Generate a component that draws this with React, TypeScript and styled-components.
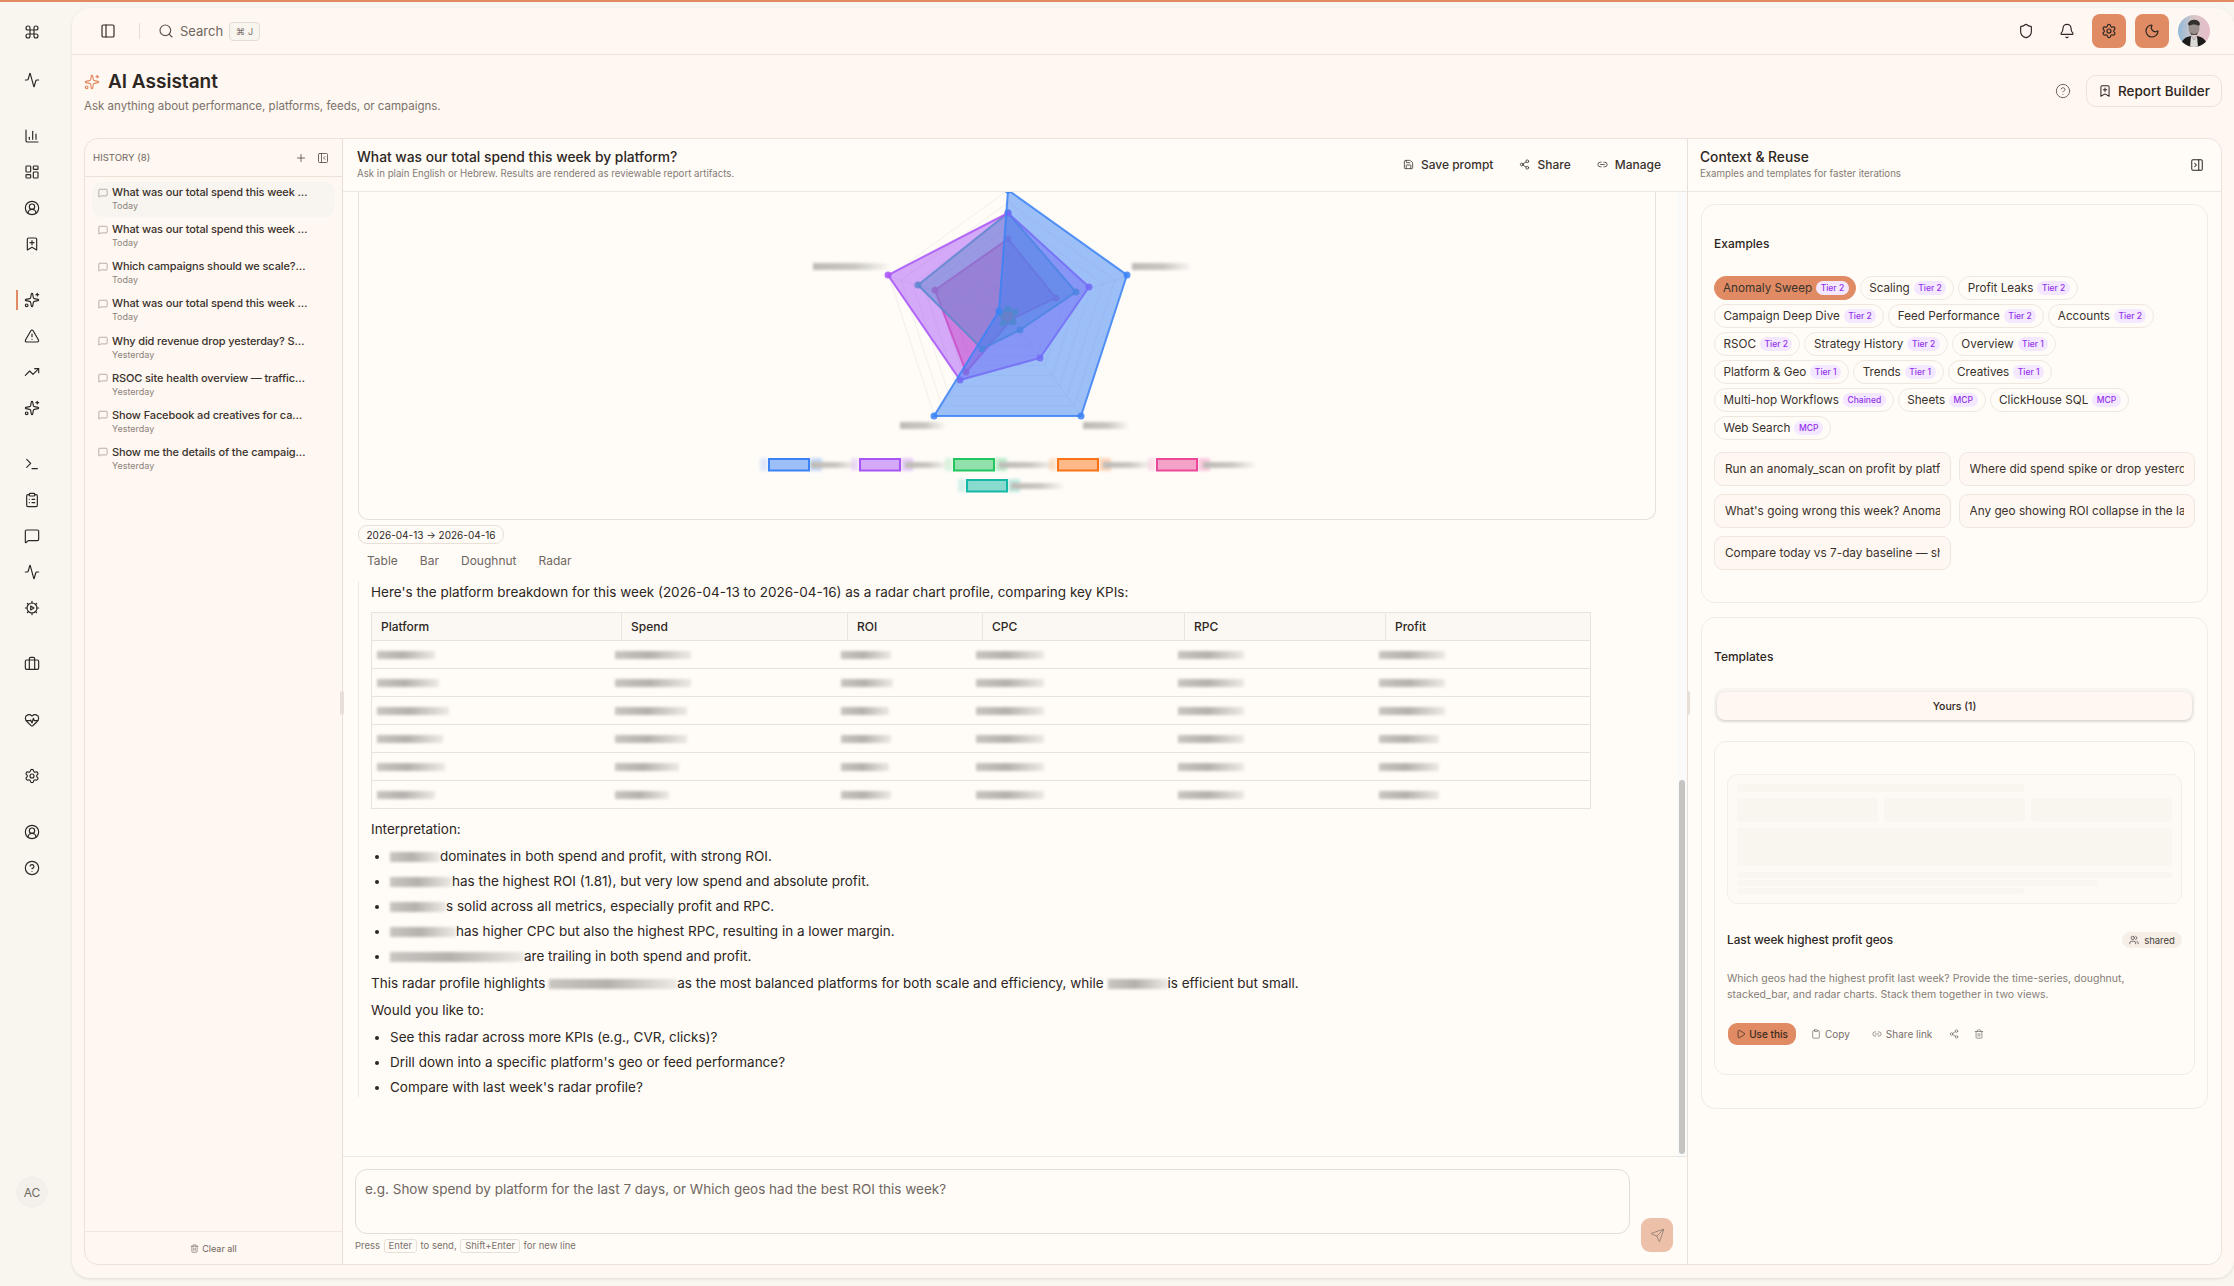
import React from "react";
import styled, { createGlobalStyle } from "styled-components";
import {
  Activity, Bell, BookmarkPlus, Briefcase, ChartColumn, CircleHelp, CircleUserRound, ClipboardList, Command, HeartPulse,
  LayoutDashboard, Link2, MessageSquare, Moon, PanelLeft, PanelLeftClose, PanelRightClose, Play, Plus, Save, Search,
  Send, Settings, Share2, Shield, Sparkles, Terminal, Trash2, TrendingUp, TriangleAlert, Users, Clipboard,
} from "lucide-react";

const Global = createGlobalStyle`
  html, body { margin: 0; padding: 0; height: 100%; background: #f9f6f0; }
  body { font-family: Inter, "Noto Sans", "Liberation Sans", sans-serif; color: #2d2622; overflow: hidden; }
  #root { height: 100%; }
  * { box-sizing: border-box; }
`;

const Page = styled.div`
  height: 1286px;
  display: flex;
  flex-direction: column;
  background: #f9f6f0;
`;
const TopLine = styled.div`
  height: 2px;
  background: #e08b63;
  flex: none;
`;
const Body = styled.div`
  flex: 1;
  display: flex;
  min-height: 0;
`;
const Rail = styled.nav`
  width: 72px;
  flex: none;
  display: flex;
  flex-direction: column;
  padding: 12px 8px 78px 0;
`;
const RailGroup = styled.div<{ $gap?: number }>`
  display: flex;
  flex-direction: column;
  margin-top: ${(p) => p.$gap ?? 20}px;
`;
const RailSlot = styled.div<{ $active?: boolean }>`
  position: relative;
  height: 36px;
  display: flex;
  align-items: center;
  justify-content: center;
  color: #2d2622;
  ${(p) =>
    p.$active &&
    `&::before { content: ""; position: absolute; left: 16px; top: 8px; width: 1.5px; height: 20px; background: #e08b63; }`}
`;
const RailAvatar = styled.div`
  margin: auto auto 0;
  width: 32px;
  height: 32px;
  border-radius: 50%;
  background: #f3f0eb;
  color: #6f6860;
  font-size: 12px;
  display: flex;
  align-items: center;
  justify-content: center;
`;
const Card = styled.main`
  flex: 1;
  min-width: 0;
  margin: 6px 0 8px;
  display: flex;
  flex-direction: column;
  background: #fff7f1;
  border-radius: 18px;
  box-shadow: 0 1px 3px rgba(60, 40, 20, 0.12);
`;
const TopBar = styled.header`
  height: 47px;
  flex: none;
  border-bottom: 1px solid #ebe3da;
  display: flex;
  align-items: center;
  padding: 0 24px 0 28px;
`;
const Separator = styled.span`
  width: 1px;
  height: 16px;
  background: #e6ddd3;
  margin: 0 18px 0 23px;
`;
const SearchLabel = styled.span`
  font-size: 13px;
  color: #6f6660;
  margin: 0 6px 0 6px;
`;
const Kbd = styled.kbd`
  width: 31px;
  height: 19px;
  border: 1px solid #e3dcd2;
  background: #f8f4ee;
  border-radius: 4px;
  font-family: inherit;
  font-size: 9px;
  color: #7c736c;
  display: flex;
  align-items: center;
  justify-content: center;
  gap: 3px;
`;
const TopActions = styled.div`
  margin-left: auto;
  display: flex;
  align-items: center;
  gap: 9px;
`;
const IconButton = styled.button<{ $accent?: boolean }>`
  width: ${(p) => (p.$accent ? 34 : 32)}px;
  height: 34px;
  border: 0;
  padding: 0;
  border-radius: 8px;
  background: ${(p) => (p.$accent ? "#e08b63" : "transparent")};
  color: #2d2622;
  display: flex;
  align-items: center;
  justify-content: center;
`;
const PageHead = styled.section`
  height: 83px;
  flex: none;
  display: flex;
  justify-content: space-between;
  padding: 0 12px;
`;
const TitleBlock = styled.div`
  padding-top: 15px;
`;
const TitleRow = styled.div`
  display: flex;
  align-items: center;
  gap: 8px;
  color: #e08b63;
`;
const PageTitle = styled.h1`
  margin: 0;
  font-size: 19px;
  line-height: 24px;
  font-weight: 600;
  color: #2d2622;
`;
const PageSub = styled.p`
  margin: 4px 0 0;
  font-size: 11.5px;
  line-height: 16px;
  color: #7b726b;
`;
const HeadActions = styled.div`
  display: flex;
  align-items: flex-start;
  gap: 15px;
  padding-top: 20px;
  color: #6f6660;
`;
const HelpWrap = styled.span`
  display: flex;
  height: 32px;
  align-items: center;
`;
const OutlineButton = styled.button`
  height: 32px;
  width: 136px;
  border: 1px solid #ebe3da;
  border-radius: 10px;
  background: transparent;
  font-family: inherit;
  font-size: 13.5px;
  font-weight: 500;
  color: #2d2622;
  display: flex;
  align-items: center;
  justify-content: center;
  gap: 6px;
`;
const Panels = styled.div`
  flex: 1;
  min-height: 0;
  margin: 0 12px 13px;
  border: 1px solid #ebe3da;
  border-radius: 14px;
  display: flex;
`;
const History = styled.aside`
  width: 257px;
  flex: none;
  display: flex;
  flex-direction: column;
`;
const HistoryHead = styled.div`
  height: 38px;
  flex: none;
  border-bottom: 1px solid #ebe3da;
  display: flex;
  align-items: center;
  padding: 0 13px 0 8px;
  gap: 10px;
  color: #5d554f;
`;
const HistoryLabel = styled.span`
  font-size: 9.6px;
  color: #6f6660;
  margin-right: auto;
`;
const HistoryList = styled.ul`
  list-style: none;
  margin: 0;
  padding: 5px 7px;
  flex: 1;
  display: flex;
  flex-direction: column;
  gap: 2.15px;
`;
const HistoryItem = styled.li<{ $active?: boolean }>`
  height: 35px;
  padding: 3px 27px 0 6px;
  border-radius: 10px;
  background: ${(p) => (p.$active ? "#f8f5f0" : "transparent")};
  display: grid;
  grid-template-columns: 10px 1fr;
  align-content: start;
  column-gap: 4px;
  color: #8b837c;
  align-items: center;
`;
const HistoryTitle = styled.span`
  font-size: 11px;
  letter-spacing: -0.12px;
  line-height: 15px;
  font-weight: 500;
  color: #3a322d;
  white-space: nowrap;
  overflow: hidden;
  text-overflow: ellipsis;
`;
const HistoryWhen = styled.span`
  grid-column: 2;
  font-size: 9px;
  line-height: 12px;
  color: #8b837c;
`;
const HistoryFoot = styled.div`
  height: 33px;
  flex: none;
  border-top: 1px solid #f0e8df;
  display: flex;
  align-items: center;
  justify-content: center;
  gap: 3px;
  font-size: 9px;
  color: #6f6660;
`;
const MainPanel = styled.section`
  position: relative;
  flex: 1;
  min-width: 0;
  display: flex;
  flex-direction: column;
  background: #fffcf8;
  border-left: 1.5px solid #e8dfd6;
  border-right: 1.5px solid #e8dfd6;
`;
const Handle = styled.span<{ $side: "left" | "right" }>`
  position: absolute;
  ${(p) => p.$side}: -3px;
  top: 552px;
  width: 4px;
  height: 24px;
  border-radius: 2px;
  background: #e8e0d8;
`;
const PanelHead = styled.div`
  height: 53px;
  flex: none;
  border-bottom: 1px solid #ebe7e1;
  display: flex;
  align-items: center;
  justify-content: space-between;
  padding: 0 12px 1px 14px;
  background: #fffcf8;
`;
const PanelTitle = styled.h2`
  margin: 0;
  font-size: 13.8px;
  line-height: 18px;
  font-weight: 500;
  color: #2d2622;
`;
const PanelSub = styled.p`
  margin: 1px 0 0;
  font-size: 9.7px;
  line-height: 14px;
  color: #847b74;
`;
const HeadButtons = styled.div`
  display: flex;
  align-items: center;
  gap: 26px;
  padding: 0 14px 0 0;
`;
const HeadButton = styled.span`
  display: flex;
  align-items: center;
  gap: 7px;
  font-size: 12px;
  font-weight: 500;
  color: #3a322d;
`;
const Scroll = styled.div`
  position: relative;
  flex: 1;
  min-height: 0;
  overflow: hidden;
  padding: 0 31px 0 15px;
`;
const Track = styled.div`
  position: absolute;
  top: 0;
  right: 0;
  bottom: 0;
  width: 10px;
  background: #fafafa;
`;
const Thumb = styled.div`
  position: absolute;
  top: 588px;
  right: 2px;
  width: 6px;
  height: 374px;
  border-radius: 3px;
  background: #c6c4c1;
`;
const ChartCard = styled.div`
  height: 328px;
  border: 1px solid #e8dfd6;
  border-top: 0;
  border-radius: 0 0 10px 10px;
`;
const ChartSvg = styled.svg`
  display: block;
  width: 100%;
  height: 100%;
`;
const DateChip = styled.div`
  margin-top: 5px;
  width: 146px;
  height: 19px;
  border: 1px solid #e8dfd6;
  border-radius: 9px;
  font-size: 10px;
  display: flex;
  align-items: center;
  justify-content: center;
  color: #2d2622;
`;
const Tabs = styled.div`
  height: 20px;
  margin-top: 6px;
  padding-left: 9px;
  display: flex;
  align-items: center;
  gap: 22px;
  font-size: 12px;
  color: #6f6660;
`;
const Message = styled.article`
  margin-top: 11px;
  border-left: 1px solid #f0e9e1;
  padding: 1px 0 0 12px;
  font-size: 13.5px;
  line-height: 20px;
  color: #2d2622;
`;
const Para = styled.p<{ $top?: number }>`
  margin: ${(p) => p.$top ?? 7}px 0 0;
`;
const Table = styled.table`
  width: 1219px;
  margin-top: 10px;
  border-collapse: collapse;
  table-layout: fixed;
  border: 1px solid #e8e2da;
`;
const Th = styled.th`
  height: 28px;
  padding: 0 0 0 9px;
  background: #fbf8f3;
  font-size: 12px;
  font-weight: 500;
  text-align: left;
  border-right: 1px solid #ebe5dd;
  border-bottom: 1px solid #e8e2da;
  &:last-child { border-right: 0; }
`;
const Td = styled.td`
  height: 28px;
  padding: 0;
  border-bottom: 1px solid #e8e2da;
  line-height: 0;
  &:first-child { padding-left: 5px; }
  &:not(:first-child) > span { margin-left: -7px; }
`;
const Smudge = styled.span<{ $w: number; $inline?: boolean }>`
  display: inline-block;
  width: ${(p) => p.$w}px;
  height: ${(p) => (p.$inline ? 10 : 8)}px;
  vertical-align: ${(p) => (p.$inline ? "-1px" : "middle")};
  background: linear-gradient(90deg, rgba(110, 105, 100, 0.38), rgba(100, 95, 90, 0.48) 45%, rgba(140, 135, 130, 0.16));
  filter: blur(1.6px);
`;
const BulletList = styled.ul`
  margin: 7px 0 0;
  padding: 0 0 0 19px;
  display: flex;
  flex-direction: column;
  gap: 5px;
`;
const Composer = styled.div`
  height: 108px;
  flex: none;
  border-top: 1px solid #ebe7e1;
  padding: 12px 14px 0 12px;
  display: grid;
  grid-template-columns: 1fr 32px;
  column-gap: 11px;
  grid-template-rows: 65px auto;
`;
const Input = styled.div`
  grid-column: 1;
  grid-row: 1;
  border: 1px solid #e4dcd6;
  border-radius: 12px;
  padding: 10px 9px;
  font-size: 13.5px;
  line-height: 18px;
  color: #6f6660;
`;
const SendButton = styled.button`
  grid-column: 2;
  grid-row: 1 / span 2;
  align-self: start;
  margin-top: 49px;
  height: 34px;
  border: 0;
  padding: 0;
  border-radius: 9px;
  background: #ecc0a9;
  color: #8a7a70;
  display: flex;
  align-items: center;
  justify-content: center;
`;
const Hint = styled.div`
  grid-column: 1;
  grid-row: 2;
  display: flex;
  align-items: center;
  gap: 3.5px;
  margin-top: 4px;
  font-size: 9.5px;
  color: #7b726b;
  height: 15px;
`;
const HintKey = styled.kbd`
  height: 14px;
  padding: 0 4px;
  border: 1px solid #e8dfd6;
  border-radius: 3px;
  font-family: inherit;
  font-size: 9.5px;
  display: flex;
  align-items: center;
`;
const Context = styled.aside`
  width: 533px;
  flex: none;
  display: flex;
  flex-direction: column;
  background: #fffbf6;
  border-radius: 0 14px 14px 0;
`;
const ContextHead = styled(PanelHead)`
  background: transparent;
  border-radius: 0 14px 0 0;
  padding: 0 17px 1px 12px;
`;
const ContextBody = styled.div`
  padding: 12px 13px;
  display: flex;
  flex-direction: column;
  gap: 14px;
`;
const Section = styled.section<{ $h: number }>`
  height: ${(p) => p.$h}px;
  border: 1px solid #f1ebe3;
  border-radius: 14px;
  padding: 30px 12px 0;
  background: #fffcf8;
`;
const SectionTitle = styled.h3`
  margin: 0;
  font-size: 12px;
  line-height: 18px;
  font-weight: 500;
  color: #2d2622;
`;
const Chips = styled.div`
  margin-top: 23px;
  padding-right: 12px;
  display: flex;
  flex-wrap: wrap;
  gap: 4px;
`;
const Chip = styled.span<{ $on?: boolean }>`
  height: 24px;
  padding: ${(p) => (p.$on ? "0 6px 0 8px" : "0 7px 0 8.5px")};
  border-radius: 12px;
  border: 1px solid ${(p) => (p.$on ? "#e08b63" : "#efe7de")};
  background: ${(p) => (p.$on ? "#e08b63" : "transparent")};
  display: flex;
  align-items: center;
  gap: 4px;
  font-size: 11.7px;
  color: #3a322d;
  white-space: nowrap;
`;
const Badge = styled.span`
  height: 14px;
  padding: 0 4.5px;
  border-radius: 7px;
  background: #f3e8ff;
  color: #9333ea;
  font-size: 8.5px;
  font-weight: 500;
  display: flex;
  align-items: center;
`;
const Prompts = styled.div`
  margin-top: 12px;
  display: grid;
  grid-template-columns: 1fr 1fr;
  gap: 8px;
`;
const Prompt = styled.div`
  height: 34px;
  min-width: 0;
  padding: 0 10px;
  border: 1px solid #efe7de;
  border-radius: 9px;
  background: #fff7f1;
  font-size: 11.8px;
  line-height: 32px;
  white-space: nowrap;
`;
const PromptText = styled.span`
  display: block;
  overflow: hidden;
  color: #3a322d;
`;
const SegTrack = styled.div`
  margin-top: 22px;
  height: 35px;
  padding: 4px 3px;
  border-radius: 10px;
  background: #f8f5f0;
`;
const Seg = styled.div`
  height: 28px;
  border-radius: 8px;
  background: #fff7f1;
  box-shadow: 0 1px 3px rgba(40, 30, 20, 0.2);
  font-size: 10.5px;
  font-weight: 500;
  display: flex;
  align-items: center;
  justify-content: center;
`;
const TemplateCard = styled.div`
  margin-top: 18px;
  height: 334px;
  border: 1px solid #f1ebe3;
  border-radius: 12px;
  padding: 32px 12px 0;
`;
const Preview = styled.div`
  height: 130px;
  border: 1px solid #f3eee7;
  border-radius: 10px;
  padding: 9px;
  display: flex;
  flex-direction: column;
  gap: 6px;
  background: #fdfaf5;
`;
const Skeleton = styled.div<{ $h: number; $w?: string }>`
  height: ${(p) => p.$h}px;
  width: ${(p) => p.$w ?? "100%"};
  border-radius: 3px;
  background: #f9f6f0;
`;
const SkeletonRow = styled.div`
  display: grid;
  grid-template-columns: repeat(3, 1fr);
  gap: 6px;
`;
const SkeletonLines = styled.div`
  display: flex;
  flex-direction: column;
  gap: 2px;
`;
const TemplateHead = styled.div`
  margin-top: 26px;
  height: 20px;
  display: flex;
  align-items: center;
  justify-content: space-between;
`;
const TemplateName = styled.div`
  font-size: 11.8px;
  font-weight: 500;
  color: #2d2622;
`;
const SharedBadge = styled.span`
  width: 60px;
  height: 16px;
  border-radius: 8px;
  background: #f6efe7;
  display: flex;
  align-items: center;
  justify-content: center;
  gap: 5px;
  font-size: 9.5px;
  color: #4a423c;
`;
const TemplateDesc = styled.p`
  margin: 21px 0 0;
  font-size: 10.5px;
  line-height: 16px;
  color: #857c75;
`;
const TemplateActions = styled.div`
  margin-top: 20px;
  padding-left: 1px;
  display: flex;
  align-items: center;
  color: #77706a;
  font-size: 10px;
`;
const UseButton = styled.button`
  width: 68px;
  height: 22px;
  border: 0;
  padding: 0;
  border-radius: 9px;
  background: #e08b63;
  color: #3a2a20;
  font-family: inherit;
  font-size: 10px;
  font-weight: 500;
  display: flex;
  align-items: center;
  justify-content: center;
  gap: 3px;
  margin-right: 15px;
`;
const TextAction = styled.span<{ $mr: number }>`
  display: flex;
  align-items: center;
  gap: 4px;
  margin-right: ${(p) => p.$mr}px;
`;

const ic = { strokeWidth: 1.75 };

function CogPlay() {
  return (
    <svg width="16" height="16" viewBox="0 0 24 24" fill="none" stroke="currentColor" strokeWidth="1.75" strokeLinecap="round" strokeLinejoin="round">
      <circle cx="12" cy="12" r="7.5" />
      <path d="M12 2v2.5M12 19.5V22M2 12h2.5M19.5 12H22M5 5l1.7 1.7M17.3 17.3 19 19M19 5l-1.7 1.7M6.7 17.3 5 19" />
      <path d="M10 9l5 3-5 3z" />
    </svg>
  );
}

function Avatar() {
  return (
    <svg width="32" height="32" viewBox="0 0 32 32">
      <defs>
        <clipPath id="av">
          <circle cx="16" cy="16" r="16" />
        </clipPath>
        <linearGradient id="avbg" x1="0" y1="0" x2="1" y2="0">
          <stop offset="0" stopColor="#8fb9d8" />
          <stop offset="0.5" stopColor="#d9c7c9" />
          <stop offset="1" stopColor="#e7bcc8" />
        </linearGradient>
      </defs>
      <g clipPath="url(#av)">
        <rect width="32" height="32" fill="url(#avbg)" />
        <ellipse cx="16" cy="13" rx="5.5" ry="7" fill="#9a8f8a" />
        <path d="M10 9c1-5 11-6 12 0l-1 2c-3-2-7-2-10 0z" fill="#33302e" />
        <path d="M12 17c2 2.5 6 2.5 8 0l-1 3h-6z" fill="#55504c" />
        <path d="M3 32c0-8 5-10 10-11l3 4 3-4c5 1 10 3 10 11z" fill="#1d1c1b" />
        <path d="M13 21l3 4 3-4 1 11h-8z" fill="#dcdad6" />
      </g>
    </svg>
  );
}

const series = [
  { c: "236,72,153", hex: "#ec4899", pts: [[1007, 238], [1055, 297], [1011, 318], [965, 371], [934, 289]] },
  { c: "20,184,166", hex: "#14b8a6", pts: [[1007, 212], [1075, 291], [1019, 329], [981, 348], [917, 284]] },
  { c: "249,115,22", hex: "#f97316", pts: [[1007, 311], [1012, 312], [1010, 319], [1003, 320], [1001, 312]] },
  { c: "34,197,94", hex: "#22c55e", pts: [[1007, 308], [1014, 311], [1012, 321], [1002, 322], [999, 312]] },
  { c: "168,85,247", hex: "#a855f7", pts: [[1007, 212], [1088, 286], [1039, 357], [959, 379], [887, 274]] },
  { c: "59,130,246", hex: "#3b82f6", pts: [[1007, 189], [1126, 274], [1080, 415], [933, 415], [998, 310]] },
];

const ring = (r: number) =>
  [0, 1, 2, 3, 4]
    .map((i) => {
      const a = (-90 + i * 72) * (Math.PI / 180);
      return `${1007 + r * Math.cos(a)},${314 + r * Math.sin(a)}`;
    })
    .join(" ");

const legend = [
  { hex: "#3b82f6", c: "59,130,246", x: 767, y: 457, lx: 810, lw: 46 },
  { hex: "#a855f7", c: "168,85,247", x: 858, y: 457, lx: 904, lw: 42 },
  { hex: "#22c55e", c: "34,197,94", x: 952, y: 457, lx: 998, lw: 56 },
  { hex: "#f97316", c: "249,115,22", x: 1056, y: 457, lx: 1102, lw: 48 },
  { hex: "#ec4899", c: "236,72,153", x: 1155, y: 457, lx: 1202, lw: 52 },
  { hex: "#14b8a6", c: "20,184,166", x: 965, y: 478, lx: 1010, lw: 52 },
];

const axisLabels = [
  { x: 812, y: 262, w: 75 },
  { x: 1131, y: 262, w: 58 },
  { x: 899, y: 421, w: 45 },
  { x: 1082, y: 421, w: 45 },
];

function Radar() {
  return (
    <ChartSvg viewBox="358 191 1296 328" preserveAspectRatio="xMinYMin slice">
      <defs>
        <filter id="soft" x="-30%" y="-100%" width="160%" height="300%">
          <feGaussianBlur stdDeviation="1.8" />
        </filter>
        <linearGradient id="fade">
          <stop offset="0" stopColor="#bdbab5" />
          <stop offset="0.55" stopColor="#c9c6c1" />
          <stop offset="1" stopColor="#c9c6c1" stopOpacity="0.1" />
        </linearGradient>
      </defs>
      <g fill="none" stroke="rgba(70,60,50,0.07)" strokeWidth="1">
        {[125, 112.5, 100, 87.5, 75, 62.5, 50, 37.5, 25, 12.5].map((r) => (
          <polygon key={r} points={ring(r)} />
        ))}
        {ring(125).split(" ").map((p) => {
          const [x, y] = p.split(",");
          return <line key={p} x1="1007" y1="314" x2={x} y2={y} />;
        })}
      </g>
      {series.map((s) => (
        <g key={s.hex}>
          <polygon
            points={s.pts.map((p) => p.join(",")).join(" ")}
            fill={`rgba(${s.c},0.5)`}
            stroke={s.hex}
            strokeWidth="2"
            strokeOpacity="0.85"
          />
          {s.pts.map((p) => (
            <circle key={p.join()} cx={p[0]} cy={p[1]} r="3.5" fill={s.hex} fillOpacity="0.85" />
          ))}
        </g>
      ))}
      {axisLabels.map((l) => (
        <rect key={l.x} x={l.x} y={l.y} width={l.w} height={7} fill="url(#fade)" filter="url(#soft)" />
      ))}
      {legend.map((l) => (
        <g key={l.hex}>
          <rect x={l.x + 42} y={l.y} width={12} height={13} fill={`rgba(${l.c},0.28)`} filter="url(#soft)" />
          <rect x={l.x - 8} y={l.y} width={8} height={13} fill={`rgba(${l.c},0.16)`} filter="url(#soft)" />
          <rect x={l.lx} y={l.y + 4} width={l.lw} height={6} fill="url(#fade)" filter="url(#soft)" />
          <rect x={l.x + 1} y={l.y + 1} width={40} height={11.5} fill={`rgba(${l.c},0.5)`} stroke={l.hex} strokeWidth="2" />
        </g>
      ))}
    </ChartSvg>
  );
}

const historyItems = [
  ["What was our total spend this week by platform?", "Today"],
  ["What was our total spend this week by platform?", "Today"],
  ["Which campaigns should we scale? Show me the data", "Today"],
  ["What was our total spend this week by platform?", "Today"],
  ["Why did revenue drop yesterday? Summarize the causes", "Yesterday"],
  ["RSOC site health overview — traffic, RPC and margin", "Yesterday"],
  ["Show Facebook ad creatives for campaign performance", "Yesterday"],
  ["Show me the details of the campaign with best ROI", "Yesterday"],
];

const columns = [250, 226, 135, 202, 201, 205];
const rows = [
  [58, 76, 50, 68, 66, 66],
  [62, 76, 52, 68, 66, 66],
  [72, 72, 48, 68, 66, 66],
  [66, 72, 50, 68, 66, 60],
  [68, 64, 48, 68, 66, 60],
  [58, 54, 50, 68, 66, 60],
];

const chips: [string, string, boolean?][] = [
  ["Anomaly Sweep", "Tier 2", true],
  ["Scaling", "Tier 2"],
  ["Profit Leaks", "Tier 2"],
  ["Campaign Deep Dive", "Tier 2"],
  ["Feed Performance", "Tier 2"],
  ["Accounts", "Tier 2"],
  ["RSOC", "Tier 2"],
  ["Strategy History", "Tier 2"],
  ["Overview", "Tier 1"],
  ["Platform & Geo", "Tier 1"],
  ["Trends", "Tier 1"],
  ["Creatives", "Tier 1"],
  ["Multi-hop Workflows", "Chained"],
  ["Sheets", "MCP"],
  ["ClickHouse SQL", "MCP"],
  ["Web Search", "MCP"],
];

const prompts = [
  "Run an anomaly_scan on profit by platform last 7 days",
  "Where did spend spike or drop yesterday compared to baseline",
  "What's going wrong this week? Anomalies by platform",
  "Any geo showing ROI collapse in the last 3 days",
  "Compare today vs 7-day baseline — show the deltas",
];

export default function App() {
  return (
    <Page>
      <Global />
      <TopLine />
      <Body>
        <Rail>
          <RailGroup $gap={0}>
            <RailSlot><Command size={16} {...ic} /></RailSlot>
          </RailGroup>
          <RailGroup $gap={12}>
            <RailSlot><Activity size={16} {...ic} /></RailSlot>
          </RailGroup>
          <RailGroup>
            <RailSlot><ChartColumn size={16} {...ic} /></RailSlot>
            <RailSlot><LayoutDashboard size={16} {...ic} /></RailSlot>
            <RailSlot><CircleUserRound size={16} {...ic} /></RailSlot>
            <RailSlot><BookmarkPlus size={16} {...ic} /></RailSlot>
          </RailGroup>
          <RailGroup>
            <RailSlot $active><Sparkles size={16} {...ic} /></RailSlot>
            <RailSlot><TriangleAlert size={16} {...ic} /></RailSlot>
            <RailSlot><TrendingUp size={16} {...ic} /></RailSlot>
            <RailSlot><Sparkles size={16} {...ic} /></RailSlot>
          </RailGroup>
          <RailGroup>
            <RailSlot><Terminal size={16} {...ic} /></RailSlot>
            <RailSlot><ClipboardList size={16} {...ic} /></RailSlot>
            <RailSlot><MessageSquare size={16} {...ic} /></RailSlot>
            <RailSlot><Activity size={16} {...ic} /></RailSlot>
            <RailSlot><CogPlay /></RailSlot>
          </RailGroup>
          <RailGroup>
            <RailSlot><Briefcase size={16} {...ic} /></RailSlot>
          </RailGroup>
          <RailGroup>
            <RailSlot><HeartPulse size={16} {...ic} /></RailSlot>
          </RailGroup>
          <RailGroup>
            <RailSlot><Settings size={16} {...ic} /></RailSlot>
          </RailGroup>
          <RailGroup>
            <RailSlot><CircleUserRound size={16} {...ic} /></RailSlot>
            <RailSlot><CircleHelp size={16} {...ic} /></RailSlot>
          </RailGroup>
          <RailAvatar>AC</RailAvatar>
        </Rail>
        <Card>
          <TopBar>
            <PanelLeft size={16} {...ic} />
            <Separator />
            <Search size={16} color="#5d554f" {...ic} />
            <SearchLabel>Search</SearchLabel>
            <Kbd><span>⌘</span><span>J</span></Kbd>
            <TopActions>
              <IconButton><Shield size={16} {...ic} /></IconButton>
              <IconButton><Bell size={16} {...ic} /></IconButton>
              <IconButton $accent><Settings size={16} {...ic} /></IconButton>
              <IconButton $accent><Moon size={16} {...ic} /></IconButton>
              <Avatar />
            </TopActions>
          </TopBar>
          <PageHead>
            <TitleBlock>
              <TitleRow>
                <Sparkles size={16} {...ic} />
                <PageTitle>AI Assistant</PageTitle>
              </TitleRow>
              <PageSub>Ask anything about performance, platforms, feeds, or campaigns.</PageSub>
            </TitleBlock>
            <HeadActions>
              <HelpWrap><CircleHelp size={16} strokeWidth={1.5} /></HelpWrap>
              <OutlineButton><BookmarkPlus size={14} {...ic} />Report Builder</OutlineButton>
            </HeadActions>
          </PageHead>
          <Panels>
            <History>
              <HistoryHead>
                <HistoryLabel>HISTORY (8)</HistoryLabel>
                <Plus size={12} {...ic} />
                <PanelLeftClose size={12} {...ic} />
              </HistoryHead>
              <HistoryList>
                {historyItems.map(([t, w], i) => (
                  <HistoryItem key={i} $active={i === 0}>
                    <MessageSquare size={10} strokeWidth={1.5} />
                    <HistoryTitle>{t}</HistoryTitle>
                    <HistoryWhen>{w}</HistoryWhen>
                  </HistoryItem>
                ))}
              </HistoryList>
              <HistoryFoot><Trash2 size={9} {...ic} />Clear all</HistoryFoot>
            </History>
            <MainPanel>
              <Handle $side="left" />
              <Handle $side="right" />
              <PanelHead>
                <div>
                  <PanelTitle>What was our total spend this week by platform?</PanelTitle>
                  <PanelSub>Ask in plain English or Hebrew. Results are rendered as reviewable report artifacts.</PanelSub>
                </div>
                <HeadButtons>
                  <HeadButton><Save size={11} {...ic} />Save prompt</HeadButton>
                  <HeadButton><Share2 size={11} {...ic} />Share</HeadButton>
                  <HeadButton><Link2 size={11} {...ic} />Manage</HeadButton>
                </HeadButtons>
              </PanelHead>
              <Scroll>
                <ChartCard><Radar /></ChartCard>
                <DateChip>2026-04-13 → 2026-04-16</DateChip>
                <Tabs><span>Table</span><span>Bar</span><span>Doughnut</span><span>Radar</span></Tabs>
                <Message>
                  <Para $top={0}>Here's the platform breakdown for this week (2026-04-13 to 2026-04-16) as a radar chart profile, comparing key KPIs:</Para>
                  <Table>
                    <colgroup>
                      {columns.map((c, i) => <col key={i} style={{ width: c }} />)}
                    </colgroup>
                    <thead>
                      <tr><Th>Platform</Th><Th>Spend</Th><Th>ROI</Th><Th>CPC</Th><Th>RPC</Th><Th>Profit</Th></tr>
                    </thead>
                    <tbody>
                      {rows.map((r, i) => (
                        <tr key={i}>
                          {r.map((w, j) => <Td key={j}><Smudge $w={w} /></Td>)}
                        </tr>
                      ))}
                    </tbody>
                  </Table>
                  <Para $top={10}>Interpretation:</Para>
                  <BulletList>
                    <li><Smudge $inline $w={50} />dominates in both spend and profit, with strong ROI.</li>
                    <li><Smudge $inline $w={62} />has the highest ROI (1.81), but very low spend and absolute profit.</li>
                    <li><Smudge $inline $w={56} />s solid across all metrics, especially profit and RPC.</li>
                    <li><Smudge $inline $w={66} />has higher CPC but also the highest RPC, resulting in a lower margin.</li>
                    <li><Smudge $inline $w={134} />are trailing in both spend and profit.</li>
                  </BulletList>
                  <Para>This radar profile highlights <Smudge $inline $w={128} />as the most balanced platforms for both scale and efficiency, while <Smudge $inline $w={60} />is efficient but small.</Para>
                  <Para>Would you like to:</Para>
                  <BulletList>
                    <li>See this radar across more KPIs (e.g., CVR, clicks)?</li>
                    <li>Drill down into a specific platform's geo or feed performance?</li>
                    <li>Compare with last week's radar profile?</li>
                  </BulletList>
                </Message>
                <Track />
                <Thumb />
              </Scroll>
              <Composer>
                <Input>e.g. Show spend by platform for the last 7 days, or Which geos had the best ROI this week?</Input>
                <SendButton><Send size={15} strokeWidth={1.25} /></SendButton>
                <Hint>Press <HintKey>Enter</HintKey> to send, <HintKey>Shift+Enter</HintKey> for new line</Hint>
              </Composer>
            </MainPanel>
            <Context>
              <ContextHead>
                <div>
                  <PanelTitle>Context &amp; Reuse</PanelTitle>
                  <PanelSub>Examples and templates for faster iterations</PanelSub>
                </div>
                <PanelRightClose size={14} {...ic} />
              </ContextHead>
              <ContextBody>
                <Section $h={399}>
                  <SectionTitle>Examples</SectionTitle>
                  <Chips>
                    {chips.map(([n, b, on]) => (
                      <Chip key={n} $on={on}>{n}<Badge>{b}</Badge></Chip>
                    ))}
                  </Chips>
                  <Prompts>
                    {prompts.map((t) => <Prompt key={t}><PromptText>{t}</PromptText></Prompt>)}
                  </Prompts>
                </Section>
                <Section $h={492}>
                  <SectionTitle>Templates</SectionTitle>
                  <SegTrack><Seg>Yours (1)</Seg></SegTrack>
                  <TemplateCard>
                    <Preview>
                      <Skeleton $h={8} $w="66%" />
                      <SkeletonRow>
                        <Skeleton $h={24} /><Skeleton $h={24} /><Skeleton $h={24} />
                      </SkeletonRow>
                      <Skeleton $h={40} />
                      <SkeletonLines>
                        <Skeleton $h={6} />
                        <Skeleton $h={6} $w="83%" />
                        <Skeleton $h={6} $w="66%" />
                      </SkeletonLines>
                    </Preview>
                    <TemplateHead>
                      <TemplateName>Last week highest profit geos</TemplateName>
                      <SharedBadge><Users size={10} {...ic} />shared</SharedBadge>
                    </TemplateHead>
                    <TemplateDesc>
                      Which geos had the highest profit last week? Provide the time-series, doughnut, stacked_bar, and radar charts. Stack them together in two views.
                    </TemplateDesc>
                    <TemplateActions>
                      <UseButton><Play size={10} {...ic} />Use this</UseButton>
                      <TextAction $mr={22}><Clipboard size={10} {...ic} />Copy</TextAction>
                      <TextAction $mr={17}><Link2 size={10} {...ic} />Share link</TextAction>
                      <TextAction $mr={15}><Share2 size={10} {...ic} /></TextAction>
                      <TextAction $mr={0}><Trash2 size={10} {...ic} /></TextAction>
                    </TemplateActions>
                  </TemplateCard>
                </Section>
              </ContextBody>
            </Context>
          </Panels>
        </Card>
      </Body>
    </Page>
  );
}
